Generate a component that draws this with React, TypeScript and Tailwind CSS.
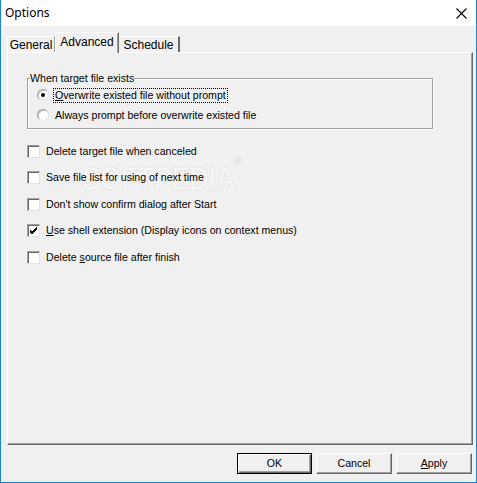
import React from "react";

const sans = { fontFamily: '"Liberation Sans", Arial, sans-serif' };

function Checkbox({ checked }: { checked?: boolean }) {
  return (
    <div className="w-[13px] h-[13px] bg-white border border-t-[#a0a0a0] border-l-[#a0a0a0] border-r-[#e3e3e3] border-b-[#e3e3e3] shadow-[inset_1px_1px_0_#696969] flex items-center justify-center shrink-0">
      {checked && (
        <svg width="9" height="9" viewBox="0 0 9 9">
          <path d="M1 4 L3 6 L8 1 M1 5 L3 7 L8 2 M1 6 L3 8 L8 3" stroke="#000" strokeWidth="1" fill="none" />
        </svg>
      )}
    </div>
  );
}

function Radio({ checked }: { checked?: boolean }) {
  return (
    <div className="w-[12px] h-[12px] rounded-full bg-white border border-t-[#a0a0a0] border-l-[#a0a0a0] border-r-[#e3e3e3] border-b-[#e3e3e3] shadow-[inset_1px_1px_0_#c8c8c8] flex items-center justify-center shrink-0">
      {checked && <div className="w-[4px] h-[4px] rounded-full bg-black" />}
    </div>
  );
}

export default function App() {
  const checks: { label: React.ReactNode; checked?: boolean }[] = [
    { label: "Delete target file when canceled" },
    { label: "Save file list for using of next time" },
    { label: "Don't show confirm dialog after Start" },
    { label: <><span className="underline">U</span>se shell extension (Display icons on context menus)</>, checked: true },
    { label: <>Delete <span className="underline">s</span>ource file after finish</> },
  ];
  return (
    <div className="w-[477px] h-[483px] bg-[#f0f0f0] border-l border-r border-b border-[#1883d7] flex flex-col text-black" style={sans}>
      {/* Title bar */}
      <div className="h-[26px] bg-white flex items-center justify-between pl-[4px] pr-[9px] shrink-0">
        <span className="text-[12px]" style={{ fontFamily: '"Noto Sans", "Liberation Sans", sans-serif' }}>Options</span>
        <svg width="11" height="11" viewBox="0 0 11 11">
          <path d="M0.5 0.5 L10.5 10.5 M10.5 0.5 L0.5 10.5" stroke="#000" strokeWidth="1.1" fill="none" />
        </svg>
      </div>
      {/* Client */}
      <div className="flex-1 flex flex-col pl-[6px] pr-[3px] pt-[6px] relative">
        {/* Tabs */}
        <div className="flex items-end h-[20px] relative z-10 text-[12px]">
          <div className="w-[48px] h-[16px] border-l border-t border-white border-r border-r-[#a0a0a0] flex items-center justify-center pt-[1px] leading-none">General</div>
          <div className="w-[64px] h-[21px] -mb-[1px] bg-[#f0f0f0] border-l border-t border-white border-r border-r-[#696969] shadow-[inset_-1px_0_0_#a0a0a0] flex items-start justify-center pt-[3px] leading-none">Advanced</div>
          <div className="w-[61px] h-[16px] border-t border-white border-r-2 border-r-[#696969] flex items-center justify-center pt-[1px] leading-none">Schedule</div>
        </div>
        {/* Panel */}
        <div className="w-[466px] h-[393px] border border-t-white border-l-white border-r-[#696969] border-b-[#696969] shadow-[inset_-1px_-1px_0_#a0a0a0] flex flex-col pt-[20px] pl-[19px] relative">
          {/* watermark (behind content) */}
          <div
            className="absolute left-[74px] top-[101px] text-[33px] font-bold tracking-[-1px] text-[#f5f5f5] pointer-events-none origin-left scale-x-[0.85] select-none"
            style={{ WebkitTextStroke: "1px #e8e8e8" }}
          >
            SOFTPEDIA<span className="text-[10px] align-top">®</span>
          </div>
          {/* Group box */}
          <fieldset className="relative w-[406px] h-[56px] border border-[#a0a0a0] shadow-[inset_1px_1px_0_#fff,1px_1px_0_#fff] m-0 pl-[8px] pr-0 pt-0 pb-0 text-[10.6px]">
            <legend className="px-0 ml-[-6px] leading-none">When target file exists</legend>
            <div className="flex flex-col gap-[7px] mt-[5px] ml-[1px]">
              <div className="flex items-center gap-[5px] h-[13px]">
                <Radio checked />
                <span className="outline-1 outline-dotted outline-black px-[1px] leading-[13px]"><span className="underline">O</span>verwrite existed file without prompt</span>
              </div>
              <div className="flex items-center gap-[6px] h-[13px]">
                <Radio />
                <span className="leading-[13px]">Always prompt before overwrite existed file</span>
              </div>
            </div>
          </fieldset>
          {/* Checkboxes */}
          <div className="relative flex flex-col mt-[9px] text-[10.6px]">
            {checks.map((c, i) => (
              <div key={i} className="flex items-center gap-[6px] h-[26.5px]">
                <Checkbox checked={c.checked} />
                <span className="leading-none">{c.label}</span>
              </div>
            ))}
          </div>
        </div>
        {/* Buttons */}
        <div className="flex justify-end gap-[4px] mt-[8px] pr-[1px] text-[10.6px]">
          <button className="w-[75px] h-[21px] bg-[#f0f0f0] border border-black shadow-[inset_1px_1px_0_#fff,inset_-1px_-1px_0_#696969,inset_-2px_-2px_0_#a0a0a0] flex items-center justify-center">OK</button>
          <button className="w-[76px] h-[21px] bg-[#f0f0f0] border border-t-white border-l-white border-r-[#696969] border-b-[#696969] shadow-[inset_-1px_-1px_0_#a0a0a0] flex items-center justify-center">Cancel</button>
          <button className="w-[76px] h-[21px] bg-[#f0f0f0] border border-t-white border-l-white border-r-[#696969] border-b-[#696969] shadow-[inset_-1px_-1px_0_#a0a0a0] flex items-center justify-center"><span className="underline">A</span>pply</button>
        </div>
      </div>
    </div>
  );
}
